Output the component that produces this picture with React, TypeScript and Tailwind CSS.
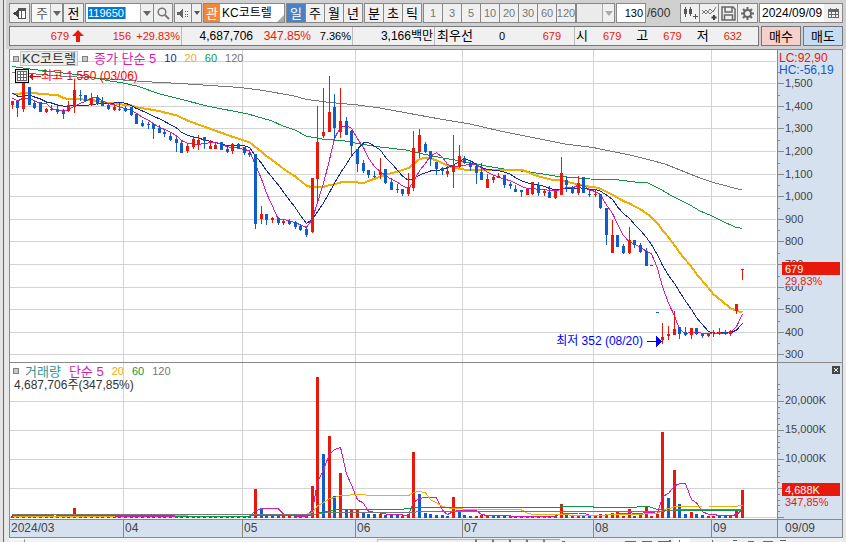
import React from "react";

const RED = "#e8190a";
const BLUE = "#0f5ccc";
const MAGENTA = "#d81bb0";
const NAVY = "#1428a0";
const GOLD = "#f0ae00";
const GREEN = "#0f9640";
const GRAY = "#777777";

const FONT = "font-['Liberation_Sans','Noto_Sans_CJK_KR',sans-serif]";

type Candle = [string, number, number, number, number];

// color, high, body top, body bottom, low
const candles: Candle[] = [
  ["r", 101, 101, 105, 109], ["b", 101, 101, 108, 117], ["r", 80, 83, 109, 112], ["b", 87, 87, 105, 105],
  ["b", 101, 103, 108, 109], ["b", 102, 102, 112, 112], ["r", 108, 109, 112, 113], ["r", 105, 109, 110, 111],
  ["b", 106, 109, 112, 114], ["b", 109, 111, 114, 119], ["r", 101, 105, 111, 112], ["r", 80, 90, 107, 113],
  ["b", 90, 95, 96, 101], ["b", 95, 95, 101, 101], ["r", 93, 98, 105, 106], ["b", 95, 97, 104, 105],
  ["b", 97, 101, 106, 106], ["b", 103, 105, 109, 110], ["r", 104, 107, 110, 111], ["b", 103, 109, 110, 111],
  ["b", 106, 108, 111, 112], ["b", 107, 107, 115, 116], ["b", 114, 114, 124, 124], ["b", 120, 123, 126, 127],
  ["b", 122, 124, 125, 129], ["b", 124, 124, 129, 139], ["b", 125, 128, 133, 133], ["b", 130, 132, 134, 137],
  ["b", 133, 136, 140, 141], ["b", 137, 139, 143, 152], ["b", 141, 143, 153, 153], ["r", 144, 146, 151, 153],
  ["r", 136, 139, 147, 149], ["r", 135, 140, 145, 150], ["b", 137, 137, 141, 149], ["r", 140, 146, 149, 149],
  ["r", 142, 145, 149, 149], ["b", 142, 142, 150, 150], ["b", 146, 149, 152, 153], ["r", 143, 144, 151, 154],
  ["b", 143, 144, 149, 149], ["b", 147, 147, 153, 155], ["b", 150, 153, 155, 157], ["b", 154, 154, 224, 229],
  ["r", 206, 214, 219, 224], ["b", 214, 214, 220, 225], ["r", 217, 218, 220, 223], ["b", 217, 218, 223, 225],
  ["r", 219, 221, 223, 225], ["b", 219, 221, 224, 225], ["b", 221, 222, 227, 229], ["b", 224, 226, 230, 231],
  ["b", 227, 229, 235, 237], ["r", 178, 178, 232, 233], ["r", 106, 142, 179, 204], ["r", 88, 132, 136, 138],
  ["r", 76, 112, 132, 132], ["b", 94, 107, 128, 139], ["r", 88, 121, 132, 138], ["b", 117, 121, 135, 135],
  ["b", 130, 131, 146, 157], ["b", 149, 149, 164, 172], ["b", 160, 163, 171, 173], ["b", 170, 170, 175, 178],
  ["b", 171, 176, 177, 178], ["r", 158, 172, 175, 179], ["b", 169, 169, 183, 184], ["b", 178, 182, 190, 190],
  ["b", 184, 189, 190, 193], ["b", 189, 189, 194, 196], ["r", 173, 187, 194, 196], ["r", 131, 148, 188, 191],
  ["r", 129, 135, 152, 158], ["b", 142, 144, 152, 153], ["b", 151, 151, 159, 166], ["b", 162, 162, 169, 175],
  ["b", 167, 168, 171, 175], ["r", 166, 171, 174, 177], ["r", 135, 165, 172, 188], ["r", 145, 156, 167, 168],
  ["b", 156, 158, 163, 164], ["b", 160, 163, 167, 171], ["b", 163, 166, 173, 184], ["b", 163, 172, 180, 180],
  ["r", 174, 179, 188, 188], ["r", 175, 177, 180, 183], ["r", 173, 176, 178, 178], ["b", 175, 175, 185, 188],
  ["b", 182, 184, 186, 189], ["b", 185, 189, 192, 192], ["b", 190, 190, 192, 197], ["r", 189, 189, 195, 195],
  ["r", 182, 182, 194, 195], ["b", 182, 185, 193, 196], ["r", 189, 191, 193, 196], ["b", 186, 192, 198, 198],
  ["r", 191, 191, 198, 199], ["r", 157, 173, 195, 195], ["b", 176, 180, 185, 192], ["b", 186, 187, 193, 194],
  ["r", 176, 183, 193, 195], ["b", 177, 177, 193, 193], ["b", 189, 194, 195, 197], ["r", 189, 194, 195, 197],
  ["b", 194, 194, 208, 209], ["b", 208, 208, 235, 245], ["r", 220, 235, 253, 253], ["b", 235, 235, 247, 247],
  ["b", 244, 246, 253, 254], ["r", 227, 240, 253, 254], ["b", 240, 240, 245, 248], ["b", 243, 245, 252, 253],
  ["b", 248, 251, 266, 266], ["b", 265, 265, 266, 266], ["b", 312, 312, 313, 313], ["r", 323, 337, 340, 344],
  ["r", 326, 334, 336, 340], ["r", 311, 329, 335, 335], ["b", 327, 327, 334, 339], ["b", 327, 332, 335, 336],
  ["r", 328, 328, 335, 339], ["b", 328, 328, 334, 335], ["b", 334, 334, 336, 338], ["r", 333, 334, 336, 337],
  ["r", 330, 332, 333, 337], ["r", 328, 332, 333, 335], ["b", 330, 332, 334, 335], ["r", 330, 331, 334, 336],
  ["r", 304, 304, 311, 314], ["r", 269, 269, 270, 280],
];

// index -> [bar top, color]; all other sessions traded next to nothing
const busySessions: Record<number, [number, string]> = {
  0: [516, "r"], 1: [515, "r"], 2: [515, "r"], 3: [516, "r"], 11: [508, "r"],
  43: [489, "r"], 44: [508, "b"], 45: [515, "b"], 53: [486, "r"], 54: [377, "r"], 55: [454, "b"],
  56: [436, "r"], 57: [496, "b"], 58: [473, "r"], 59: [510, "b"], 60: [510, "r"], 61: [510, "r"],
  62: [513, "b"], 63: [514, "b"], 64: [514, "b"], 65: [514, "r"], 66: [515, "b"], 67: [515, "b"],
  68: [515, "b"], 70: [514, "r"], 71: [452, "r"], 72: [494, "b"], 73: [513, "b"], 74: [514, "b"],
  75: [515, "b"], 76: [515, "b"], 78: [497, "r"], 79: [510, "b"], 80: [515, "b"], 82: [516, "r"],
  83: [515, "r"], 97: [504, "r"], 98: [514, "b"], 100: [515, "r"], 104: [514, "r"], 105: [514, "r"],
  106: [513, "r"], 107: [512, "r"], 109: [509, "r"], 111: [514, "r"], 112: [507, "r"], 114: [514, "r"],
  115: [432, "r"], 116: [498, "b"], 117: [470, "r"], 118: [504, "b"], 119: [514, "b"], 120: [512, "r"],
  121: [514, "b"], 122: [515, "b"], 127: [515, "r"], 128: [510, "r"], 129: [490, "r"],
};

const volumes = candles.map((c, i): [number, string] => busySessions[i] ?? [516, i % 5 < 3 ? "b" : "r"]);

const xAt = (i: number) => Math.floor(12.2 + 5.659 * i);
const fillOf = (c: string) => (c === "r" ? RED : BLUE);

function average(values: number[], span: number, head: number[]) {
  return values
    .map((_, i) => {
      let y = head[Math.min(i, head.length - 1)];
      if (i >= span - 1) y = values.slice(i - span + 1, i + 1).reduce((a, b) => a + b, 0) / span;
      return `${xAt(i) + 0.5},${y.toFixed(1)}`;
    })
    .join(" ");
}

const closes = candles.map(([c, , top, bottom]) => (c === "r" ? top : bottom));
const ma5 = average(closes, 5, [98, 101, 98, 98]);
const ma10 = average(closes, 10, [93, 96, 96, 95, 97, 99, 102, 103, 105]);
const ma20 = average(closes, 20, [94, 94, 93, 93, 93, 94, 94, 95, 95, 98, 99, 99, 99, 100, 100, 101, 102, 103, 103]);
const tops = volumes.map(([top]) => top);
const vol5 = average(tops, 5, [516, 516, 516, 516]);
const vol20 = average(tops, 20, [516]);

const MA60 =
  "12,66.5 30,69 80,75 107,80.5 123,83 137,86 160,94 180,99 207,106 230,110.5 248,114 272,121 283,126 295,130 306,136 322,139 345,141 360,144 380,147 406,150 432,156 466,162 483,165.5 504,169 530,172 555,176 590,179 615,179.5 635,182 648,183 660,189 672,196 690,205 700,211 712,216 722,221 735,227 742,228.5";
const MA120 =
  "12,72 60,76 110,79 143,81.5 180,83.5 240,87.5 260,90 292,95.5 307,99.5 330,102.5 358,105 380,108 407,113 440,119 470,124 500,131 525,136 550,141 565,144 593,147.5 610,151 630,155 650,160 665,164 680,170 700,178 715,183 742,190";
const VOL60 =
  "12,516 55,515 75,515.5 145,515 175,516 250,516 260,515.5 312,515.5 320,512.5 338,509.5 400,509.5 413,508 420,507.5 558,507.5 562,506.5 590,506.5 597,507.5 634,507.5 640,506.5 648,506.5 656,509 668,510.5 742,510.5";
const VOL120 = "12,514.5 312,514.5 330,512.5 400,512.5 432,511.5 660,511.5 680,509.5 742,509.5";

const monthLines = [123, 242, 355, 462, 593, 711];
const priceLevels = [
  [1600, 61], [1500, 83], [1400, 106], [1300, 128], [1200, 151], [1100, 174], [1000, 196],
  [900, 219], [800, 241], [700, 264], [600, 287], [500, 309], [400, 332], [300, 354],
];
const volumeLevels: [string, number][] = [["20,000K", 401], ["15,000K", 430], ["10,000K", 459], ["5,000K", 488]];

function Grid({ rows, top, bottom }: { rows: number[]; top: number; bottom: number }) {
  return (
    <g fill="#d3d3d3">
      {rows.map((y) => <rect key={y} x={10} y={y} width={766} height={1} />)}
      {monthLines.map((x) => <rect key={x} x={x} y={top} width={1} height={bottom - top} />)}
    </g>
  );
}

function Line({ points, color, width = 1 }: { points: string; color: string; width?: number }) {
  return <polyline points={points} fill="none" stroke={color} strokeWidth={width} />;
}

function Down({ muted = false }: { muted?: boolean }) {
  return (
    <svg width="8" height="5" viewBox="0 0 8 5" className="shrink-0" aria-hidden="true">
      <path d="M0 0h8L4 5z" fill={muted ? "#aaaaaa" : "#666666"} />
    </svg>
  );
}

const cell = "flex h-5 shrink-0 items-center justify-center border border-[#888888] bg-[#f0f0f0]";

function Segments({ items, active, muted = false }: { items: string[]; active?: string; muted?: boolean }) {
  return (
    <div className="flex shrink-0 border-l border-[#888888]">
      {items.map((t) => (
        <button
          key={t}
          className={`flex h-5 w-[19px] items-center justify-center border-y border-r border-[#888888] whitespace-nowrap ${
            t === active
              ? "bg-[#4a80c4] text-white"
              : muted
                ? "bg-[#f0f0f0] text-[11px] text-[#777777]"
                : "bg-[#f0f0f0] text-black"
          }`}
        >
          {t}
        </button>
      ))}
    </div>
  );
}

function Toolbar() {
  return (
    <div className="flex h-5 items-center">
      <button className={`${cell} w-[21px]`} aria-label="패널 접기">
        <svg width="13" height="13" viewBox="0 0 13 13" shapeRendering="crispEdges">
          <path d="M5 1.500h7v10H5" fill="#fff" stroke="#555" />
          <path d="M5 1h8v3H5zM8 4h1v8H8z" fill="#555" />
          <path d="M6 2v9L0 6.500z" fill="#444" />
        </svg>
      </button>
      <div className={`${cell} ml-px w-8`}>
        <select aria-label="종목 구분" className="h-full flex-1 appearance-none bg-[#f8f8f8] pl-1 text-[#555555] outline-none">
          <option>주</option>
        </select>
        <span className="flex h-full w-3 items-center justify-center border-l border-[#aaaaaa]"><Down /></span>
      </div>
      <button className={`${cell} w-[21px]`}>전</button>
      <div className={`${cell} ml-px w-[88px] bg-white`}>
        <div className="flex h-full flex-1 items-center bg-white pl-[2px]">
          <input
            aria-label="종목코드"
            defaultValue="119650"
            className="h-3 w-[52px] bg-[linear-gradient(to_right,#0078d7_37px,#ff8c28_37px,#ff8c28_38px,#ffffff_38px)] text-[11px] leading-3 text-white outline-none"
          />
        </div>
        <button aria-label="종목 목록" className="flex h-full w-[13px] items-center justify-center border-l border-[#aaaaaa] bg-[#f0f0f0]"><Down /></button>
        <button aria-label="검색" className="flex h-full w-[19px] items-center justify-center border-l border-[#888888] bg-[#f0f0f0]">
          <svg width="13" height="13" viewBox="0 0 13 13" fill="none" stroke="#777" strokeWidth="1.500">
            <circle cx="5" cy="5" r="3.800" />
            <path d="M8 8l4 4" strokeWidth="2" />
          </svg>
        </button>
      </div>
      <div className={`${cell} ml-px w-7`}>
        <button aria-label="소리" className="flex h-full flex-1 items-center justify-center">
          <svg width="13" height="11" viewBox="0 0 13 11" shapeRendering="crispEdges" fill="#666">
            <path d="M0 4h2l4-4v11L2 7H0zM8 3h1v1H8zM8 6h1v1H8zM8 8h1v1H8zM10 3h1v1h-1zM10 6h1v1h-1zM10 8h1v1h-1z" />
          </svg>
        </button>
        <button aria-label="소리 설정" className="flex h-full w-[10px] items-center justify-center border-l border-[#888888]">
          <svg width="6" height="4" viewBox="0 0 6 4"><path d="M0 0h6L3 4z" fill="#555" /></svg>
        </button>
      </div>
      <div className={`${cell} relative ml-px w-[82px] justify-start bg-white`}>
        <button className="flex h-full w-4 items-center justify-center bg-[#f58634] text-white">관</button>
        <span className="flex h-full flex-1 items-center bg-white pl-0.5 text-xs">KC코트렐</span>
        <svg width="7" height="7" viewBox="0 0 7 7" className="absolute right-0 bottom-0"><path d="M7 0v7H0z" fill="#aaa" /></svg>
      </div>
      <div className="ml-px flex gap-px">
        <Segments items={["일", "주", "월", "년"]} active="일" />
        <Segments items={["분", "초", "틱"]} />
        <Segments items={["1", "3", "5", "10", "20", "30", "60", "120"]} muted />
      </div>
      <div className={`${cell} w-[39px]`}>
        <select aria-label="사용자 주기" disabled className="h-full w-0 flex-1 appearance-none bg-[#ebebeb]"><option></option></select>
        <span className="flex h-full w-3 items-center justify-center border-l border-[#aaaaaa]"><Down muted /></span>
      </div>
      <input aria-label="조회 개수" defaultValue="130" className="ml-px h-5 w-[30px] shrink-0 border border-[#888888] bg-white pr-0.5 text-right text-[11px] outline-none" />
      <span className="pl-px text-xs text-[#333333]">/600</span>
      <div className="ml-auto flex shrink-0 border-l border-[#888888]">
        <button aria-label="차트 유형" className={`${cell} w-[19px] border-l-0`}>
          <svg width="15" height="15" viewBox="0 0 15 15" shapeRendering="crispEdges" fill="#555">
            <path d="M2 1h1v10H2zM1 3h3v5H1zM7 1h1v9H7zM6 3h3v5H6zM12 8h1v5h-1zM10 10h5v1h-5z" />
          </svg>
        </button>
        <button aria-label="지표 추가" className={`${cell} w-[19px] border-l-0`}>
          <svg width="15" height="15" viewBox="0 0 15 15" fill="none" stroke="#777">
            <path d="M0 4L4 8l4-5 3 3 3-5M0 8l4-4 4 4 5-5" />
            <path d="M12 9v5M9.500 11.500h5" stroke="#444" strokeWidth="2" />
          </svg>
        </button>
        <button aria-label="저장" className={`${cell} w-[19px] border-l-0`}>
          <svg width="15" height="15" viewBox="0 0 15 15" fill="none" stroke="#666" strokeWidth="1.500">
            <path d="M1 1h11l2 2v11H1zM4 1v5h7V1M3.500 14V9h8v5" />
          </svg>
        </button>
        <button aria-label="설정" className={`${cell} w-5 border-l-0`}>
          <svg width="13" height="13" viewBox="0 0 13 13" fill="none" stroke="#666">
            <circle cx="6.500" cy="6.500" r="3.500" strokeWidth="2" />
            <path d="M6.500 0v3M6.500 10v3M0 6.500h3M10 6.500h3M2 2l2 2M9 9l2 2M11 2L9 4M4 9l-2 2" strokeWidth="2" />
          </svg>
        </button>
      </div>
      <div className={`${cell} ml-px w-[84px] bg-white`}>
        <input aria-label="조회 일자" defaultValue="2024/09/09" className="h-full w-0 flex-1 bg-white pl-[2px] text-xs outline-none" />
        <button aria-label="달력" className="flex h-full w-[18px] items-center justify-center bg-[#f0f0f0]">
          <svg width="11" height="10" viewBox="0 0 11 10" shapeRendering="crispEdges">
            <path d="M0 1h11v9H0z" fill="#666" />
            <path d="M1 4h2v2H1zM4 4h3v2H4zM8 4h2v2H8zM1 7h2v2H1zM4 7h3v2H4zM8 7h2v2H8z" fill="#f4f4f4" />
            <path d="M2 0h1v2H2zM8 0h1v2H8z" fill="#666" />
          </svg>
        </button>
      </div>
    </div>
  );
}

function QuoteBar() {
  return (
    <div className="flex h-5 gap-[2px]">
      <div className="flex flex-1 items-center border border-[#777777] bg-[#f0f0f0] text-xs whitespace-nowrap">
        <div className="flex h-full w-[172px] items-center justify-end border-r border-[#bbbbbb] pr-px text-[11px] text-[#e8190a]">
          <span>679</span>
          <svg width="12" height="12" viewBox="0 0 12 12" className="ml-[3px]" aria-label="상한">
            <path d="M6 0l6 6H8v6H4V6H0z" fill={RED} />
          </svg>
          <span className="w-[47px] text-right">156</span>
          <span className="w-[49px] text-right">+29.83%</span>
        </div>
        <div className="flex h-full w-[171px] items-center justify-end border-r border-[#bbbbbb] pr-px">
          <span>4,687,706</span>
          <span className="w-[58px] text-right text-[#e8190a]">347.85%</span>
          <span className="w-10 text-right text-[11px]">7.36%</span>
        </div>
        <div className="flex h-full w-[82px] items-center justify-end border-r border-[#bbbbbb] pr-px">3,166백만</div>
        <div className="flex h-full w-[140px] items-center border-r border-[#bbbbbb] pl-0.5">
          <span className="text-[13px]">최우선</span>
          <span className="flex-1 text-right text-[11px]">0</span>
          <span className="box-content w-14 pr-[13px] text-right text-[11px] text-[#e8190a]">679</span>
        </div>
        <div className="flex flex-1 items-center justify-between pr-4 pl-px text-[11px] text-[#e8190a]">
          <span className="text-[13px] text-black">시</span><span>679</span>
          <span className="text-[13px] text-black">고</span><span>679</span>
          <span className="text-[13px] text-black">저</span><span>632</span>
        </div>
      </div>
      <button className="w-10 border border-[#777777] bg-[#f6d0cb]">매수</button>
      <button className="w-10 border border-[#777777] bg-[#c6dcf4]">매도</button>
    </div>
  );
}

function Marker() {
  return <span className="size-[6px] shrink-0 border border-[#808080] bg-[#c8c8c8]" />;
}

function Periods() {
  return (
    <>
      <span className="text-[11px] text-[#f0ae00]">20</span>
      <span className="text-[11px] text-[#0f9640]">60</span>
      <span className="text-[11px] text-[#777777]">120</span>
    </>
  );
}

function PriceSection() {
  return (
    <section className="grid h-[313px] grid-cols-[1fr_65px] border-b border-[#888888]">
      <div className="relative">
        <svg viewBox="10 50 767 312" preserveAspectRatio="none" className="block h-[312px] w-full" shapeRendering="crispEdges">
          <Grid rows={priceLevels.map(([, y]) => y)} top={50} bottom={362} />
          <Line points={MA120} color={GRAY} />
          <Line points={MA60} color={GREEN} />
          <Line points={ma20} color={GOLD} width={2} />
          <Line points={ma10} color={NAVY} />
          <Line points={ma5} color={MAGENTA} />
          {candles.map(([c, high, top, bottom, low], i) => (
            <g key={i} fill={fillOf(c)}>
              <rect x={xAt(i)} y={high} width={1} height={low - high} />
              <rect x={xAt(i) - 1} y={top} width={3} height={bottom - top} />
            </g>
          ))}
        </svg>
        <div className="absolute top-px left-[3px] flex h-[15px] items-center">
          <Marker />
          <span className="ml-px flex h-[15px] w-[58px] items-center justify-center border border-[#c4c4c4] bg-[#ececec] text-[#333333]">KC코트렐</span>
          <span className="ml-1 flex items-center gap-2">
            <span className="flex items-center gap-1.5 text-[#d81bb0]"><Marker />종가 단순 5</span>
            <span className="text-[11px] text-[#1428a0]">10</span>
            <Periods />
          </span>
        </div>
        <div className="absolute top-[18px] left-[5px] flex h-4 items-center text-xs text-[#ff0000]">
          <svg width="14" height="14" viewBox="0 0 14 14" shapeRendering="crispEdges">
            <path d="M.5.5h13v13H.5z" fill="#e4e4e4" stroke="#000" />
            <path d="M2.500 2.500h9v9h-9zM2.500 5.500h9M2.500 8.500h9M5.500 2.500v9M8.500 2.500v9" fill="#fff" stroke="#666" />
          </svg>
          <svg width="12" height="9" viewBox="0 0 12 9" shapeRendering="crispEdges">
            <path d="M0 4.500L4 0v9zM3 4h9v1H3z" fill="#f00" />
          </svg>
          <span className="whitespace-nowrap">최고 1,550 (03/06)</span>
        </div>
        <div className="absolute top-[283px] right-[15%] flex h-4 items-center text-xs text-[#0000ff]">
          <span className="whitespace-nowrap">최저 352 (08/20)</span>
          <svg width="15" height="11" viewBox="0 0 15 11" shapeRendering="crispEdges" className="ml-1">
            <path d="M0 5h9v1H0zM9 0l6 5.500L9 11z" fill="#00f" />
          </svg>
        </div>
      </div>
      <svg viewBox="778 50 64 312" className="block h-[312px] w-full border-l border-[#888888] bg-[#d6e1ef] text-[11px]">
        <g fill="#888888" shapeRendering="crispEdges">
          {priceLevels.slice(1).map(([, y]) => (
            <g key={y}>
              <rect x={778} y={y} width={6} height={1} />
              <rect x={778} y={y - 11} width={2} height={1} />
            </g>
          ))}
          <rect x={778} y={343} width={2} height={1} />
        </g>
        <g fill="#444444">
          {priceLevels.slice(1).map(([p, y]) => (
            <text key={p} x={785} y={y + 4}>{p.toLocaleString("en-US")}</text>
          ))}
        </g>
        <rect x={782} y={275} width={40} height={11} fill="#d6e1ef" />
        <rect x={782} y={262} width={58} height={13} fill={RED} />
        <text x={785} y={273} fill="#ffffff">679</text>
        <text x={785} y={285} fill={RED}>29,83%</text>
        <text x={779} y={62} fill={RED} className="text-xs">LC:92,90</text>
        <text x={779} y={74} fill={BLUE} className="text-xs">HC:-56,19</text>
      </svg>
    </section>
  );
}

function VolumeSection() {
  return (
    <section className="grid h-[157px] grid-cols-[1fr_65px] border-b border-[#888888]">
      <div className="relative">
        <svg viewBox="10 363 767 156" preserveAspectRatio="none" className="block h-[156px] w-full" shapeRendering="crispEdges">
          <Grid rows={[401, 430, 459, 488, 517]} top={363} bottom={519} />
          {volumes.map(([top, c], i) => (
            <rect key={i} x={xAt(i) - 1} y={top} width={3} height={518 - top} fill={fillOf(c)} />
          ))}
          <Line points={vol5} color={MAGENTA} />
          <Line points={vol20} color={GOLD} />
          <Line points={VOL60} color={GREEN} />
          <Line points={VOL120} color={GRAY} />
        </svg>
        <div className="absolute top-px left-[3px] text-[#333333]">
          <div className="flex h-[14px] items-center gap-2">
            <span className="flex items-center gap-1.5 text-[#2f9494]"><Marker />거래량</span>
            <span className="text-[#d81bb0]">단순 5</span>
            <Periods />
          </div>
          <div className="flex h-[14px] items-center pl-px text-xs">4,687,706주(347,85%)</div>
        </div>
      </div>
      <div className="relative border-l border-[#888888] bg-[#d6e1ef]">
        <svg viewBox="778 363 64 156" className="block h-[156px] w-full text-[11px]">
          <g fill="#888888" shapeRendering="crispEdges">
            {Array.from({ length: 24 }, (_, k) => (
              <rect key={k} x={778} y={Math.round(517 - k * 5.8)} width={k % 5 === 0 ? 6 : 2} height={1} />
            ))}
          </g>
          {volumeLevels.map(([t, y]) => <text key={t} x={785} y={y + 3} fill="#444444">{t}</text>)}
          <rect x={782} y={483} width={58} height={13} fill={RED} />
          <text x={785} y={494} fill="#ffffff">4,688K</text>
          <text x={785} y={506} fill={RED}>347,85%</text>
        </svg>
        <button aria-label="닫기" className="absolute top-[3px] right-[2px] flex size-2 items-center justify-center bg-[#444444]">
          <svg width="4" height="4" viewBox="0 0 4 4"><path d="M0 0l4 4M4 0L0 4" stroke="#fff" /></svg>
        </button>
      </div>
    </section>
  );
}

function DateRow() {
  const months = ["04", "05", "06", "07", "08", "09"];
  return (
    <div className="grid h-[18px] grid-cols-[1fr_65px] border-b border-[#888888] bg-[#d6e1ef] text-xs text-[#444444]">
      <div className="grid grid-cols-[113fr_119fr_113fr_107fr_131fr_118fr_66fr]">
        <span className="flex items-center pb-px pl-px">2024/03</span>
        {months.map((m) => (
          <span key={m} className="flex items-center border-l border-[#888888] pb-px pl-px">{m}</span>
        ))}
      </div>
      <span className="flex items-center border-l border-[#888888] pb-px pl-[7px]">09/09</span>
    </div>
  );
}

function BottomStrip() {
  return (
    <div className="flex h-1 overflow-hidden bg-[#f0f0f0]">
      <div className="mt-px h-3 w-4 border-t border-r border-t-white border-r-[#888888] bg-[#f0f0f0]" />
      <div className="h-full flex-[352] bg-[#f4f4f4]" />
      <div className="mt-px h-3 flex-[96] border-t border-l border-[#bbbbbb] bg-[#f0f0f0]" />
      {[0, 1, 2, 3, 4].map((n) => (
        <div key={n} className="mt-px h-3 w-[17px] border-t border-l-2 border-t-[#aaaaaa] border-l-[#777777]" />
      ))}
      <svg viewBox="560 538 283 4" className="h-1 flex-[283]" shapeRendering="crispEdges">
        <path d="M674 538h16v4h-16z" fill="#fff" />
        <path
          d="M562 541h3v1h-3zM625 541h11v1h-11zM642 541h10v1h-10zM658 541h12v1h-12zM669 540h2v2h-2zM679 540h1v2h-1zM712 540h1v2h-1zM733 540h4v1h-4zM748 541h6v1h-6zM763 541h10v1h-10zM780 540h6v1h-6z"
          fill="#666"
        />
      </svg>
    </div>
  );
}

export default function App() {
  return (
    <main className={`flex overflow-hidden bg-[#e8e8e8] text-[13px] leading-none text-black ${FONT}`}>
      <div className="w-1 shrink-0 border-r border-[#666666] bg-[#e4e4e4]" />
      <div className="min-w-0 flex-1">
        <header className="ml-[2px] flex flex-col gap-[3px] bg-[#d0d0d0] pt-[3px] pr-[3px] pb-[3px] pl-[3px]">
          <Toolbar />
          <QuoteBar />
        </header>
        <div className="mr-[3px] ml-[5px]">
          <div className="border-x border-t border-[#888888] bg-white">
            <PriceSection />
            <VolumeSection />
            <DateRow />
          </div>
          <BottomStrip />
        </div>
      </div>
    </main>
  );
}
